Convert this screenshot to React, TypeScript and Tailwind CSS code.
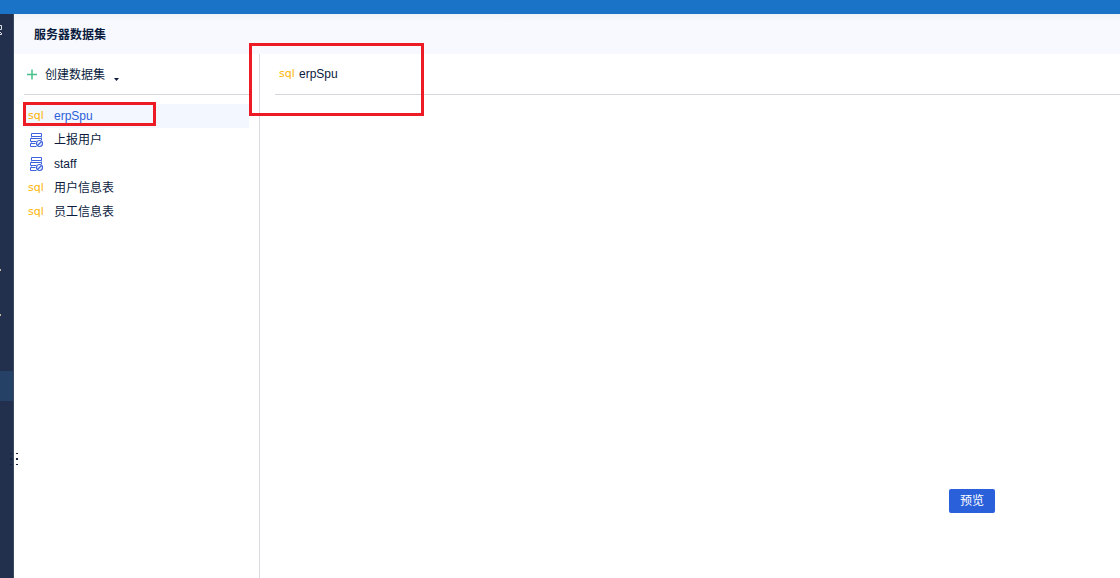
import React from 'react';

interface Dataset {
  name: string;
  type: 'sql' | 'table';
}

const datasets: Dataset[] = [
  { name: 'erpSpu', type: 'sql' },
  { name: '上报用户', type: 'table' },
  { name: 'staff', type: 'table' },
  { name: '用户信息表', type: 'sql' },
  { name: '员工信息表', type: 'sql' }
];

const SqlIcon: React.FC = () => (
  <span className="w-4 shrink-0 text-left font-['DejaVu_Sans',sans-serif] text-[11px] leading-4 text-[#fdb400]">sql</span>
);

const TableIcon: React.FC = () => (
  <svg className="h-4 w-4 shrink-0" viewBox="0 0 16 16" fill="none" stroke="#3a63dc">
    <path d="M3.5 1.5h10v3h-10zM13.5 8V6.5h-11v3h6M7.5 11.5h-5v3h6" />
    <path d="M3.5 4.5v2M13.5 4.5v2M3.5 9.5v2" strokeOpacity="0.5" />
    <circle cx="11.5" cy="11.5" r="3" fill="#fff" strokeWidth="1.2" />
    <path d="M9.5 13.5l4-4" strokeWidth="1.2" />
  </svg>
);

const Sidebar: React.FC = () => (
  <nav className="flex w-3.5 shrink-0 flex-col border-r border-[#3c4963] bg-[#22304d]">
    <svg className="mt-2.5 h-3 w-1" viewBox="0 0 4 12" fill="none" stroke="#dfe3ea">
      <path d="M0 1.5h1.5v4H0M0 8.5h1M1.5 9v1.5H0" />
    </svg>
    <svg className="mt-[232px] h-1 w-1" viewBox="0 0 4 4">
      <path d="M0 1h1v2H0z" fill="#c4b5a5" />
    </svg>
    <svg className="mt-[41px] h-1 w-1" viewBox="0 0 4 4">
      <path d="M0 1h1v2H0z" fill="#c4b5a5" />
    </svg>
    <div className="mt-[54px] h-[30px] bg-[#254165]" />
  </nav>
);

const App: React.FC = () => {
  return (
    <div className="relative flex min-h-screen flex-col bg-white font-['Liberation_Sans','Noto_Sans_CJK_SC',sans-serif] text-xs text-[#0a1b3d]">
      <div className="h-3.5 bg-[#1a73c7]" />

      <div className="flex grow">
        <Sidebar />

        <div className="flex min-w-0 grow flex-col">
          <header className="flex h-10 items-center bg-gradient-to-b from-[#f0f2f6] via-[#f7f9fe] via-20% to-[#f7f9fe] px-5 pt-0.5">
            <h1 className="font-bold">服务器数据集</h1>
          </header>

          <div className="flex grow">
            {/* Dataset list */}
            <aside className="w-[246px] shrink-0 border-r border-[#d9dbe0] px-2.5">
              <button className="flex h-[41px] w-[225px] items-center border-b border-[#d5d7df] pt-0.5 pl-0.5">
                <svg className="mr-[7px] h-3 w-3" viewBox="0 0 12 12" stroke="#45c08b" strokeWidth="1.5">
                  <path d="M1 5.5h10M6 .5v10" />
                </svg>
                创建数据集
                <svg className="mt-2 ml-2 h-1 w-2" viewBox="0 0 8 4" fill="#0a1b3d">
                  <path d="M1 1h5L3.5 4z" />
                </svg>
              </button>

              <ul className="relative mt-[9px] w-[225px]">
                {datasets.map((dataset, index) => (
                  <li key={dataset.name}>
                    <button
                      className={`flex h-6 w-full items-center gap-2.5 pl-1 ${index === 0 ? 'bg-[#f3f7ff] text-[#2b5fda]' : ''}`}
                    >
                      {dataset.type === 'sql' ? <SqlIcon /> : <TableIcon />}
                      {dataset.name}
                    </button>
                  </li>
                ))}
                <li aria-hidden="true" className="absolute -top-0.5 -left-px h-6 w-[133px] border-3 border-[#ed1c24]" />
              </ul>
            </aside>

            {/* Dataset detail */}
            <main className="relative flex min-w-0 grow flex-col pl-[15px]">
              <div className="flex h-[41px] items-center gap-1 border-b border-[#d5d7df] pl-1">
                <SqlIcon />
                <h2>erpSpu</h2>
              </div>
              <div className="flex grow items-end justify-end pr-[125px] pb-[65px]">
                <button className="h-6 w-[46px] rounded-xs bg-[#2b60db] text-white">预览</button>
              </div>
              <div className="pointer-events-none absolute -top-[11px] -left-[11px] h-[73px] w-[175px] border-3 border-[#ed1c24]" />
            </main>
          </div>
        </div>
      </div>

      {/* Resize handle */}
      <svg className="absolute top-[452px] left-2.5 h-3.5 w-2.5" viewBox="0 0 10 14" fill="#14213f">
        <path d="M0 1h2v1H0zM0 6h2v2H0zM0 12h2v1H0zM6 1h2v1H6zM6 6h2v2H6zM6 12h2v1H6z" />
      </svg>
    </div>
  );
};

export default App;
